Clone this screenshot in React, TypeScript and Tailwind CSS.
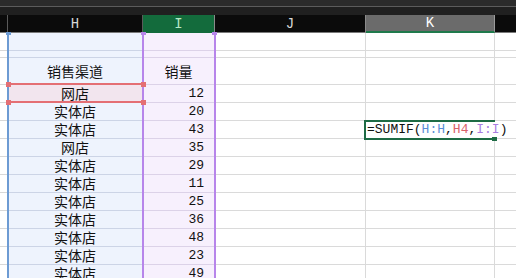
const COLS = "grid grid-cols-[8px_135px_72px_151px_129px_1fr]";

type Row = { h: string; ch?: string; num?: string; head?: boolean };

const rows: Row[] = [
  { h: "h-[18px]" },
  { h: "h-[7px]" },
  { h: "h-[27px]", ch: "销售渠道", num: "销量", head: true },
  { h: "h-[18px]", ch: "网店", num: "12" },
  { h: "h-[18px]", ch: "实体店", num: "20" },
  { h: "h-[18px]", ch: "实体店", num: "43" },
  { h: "h-[18px]", ch: "网店", num: "35" },
  { h: "h-[18px]", ch: "实体店", num: "29" },
  { h: "h-[18px]", ch: "实体店", num: "11" },
  { h: "h-[18px]", ch: "实体店", num: "25" },
  { h: "h-[18px]", ch: "实体店", num: "36" },
  { h: "h-[18px]", ch: "实体店", num: "48" },
  { h: "h-[18px]", ch: "实体店", num: "23" },
  { h: "h-[18px]", ch: "实体店", num: "49" },
];

const cjk = "font-['Noto_Sans_CJK_SC','Noto_Sans',sans-serif]";
const mono = "font-['Liberation_Mono',monospace]";

function Formula() {
  return (
    <span className={`relative z-10 whitespace-nowrap pl-[1px] text-[13px] leading-[15px] text-[#111] ${mono}`}>
      =SUMIF(<span className="text-[#5b8fd8]">H:H</span>,<span className="text-[#d9636b]">H4</span>,
      <span className="text-[#a97de2]">I:I</span>)
    </span>
  );
}

export default function App() {
  return (
    <div className="relative h-[278px] w-[516px] overflow-hidden bg-white">
      <div className="h-[6px] bg-[#2b2b2b]" />
      <div className="h-px bg-[#5c5c5c]" />
      <div className="h-[8px] bg-[#202020]" />

      {/* column headers */}
      <div className={`${COLS} h-[18px] border-b border-[#7a7a7a] bg-[#0b0b0b] text-[14px] leading-[16px] ${mono}`}>
        <div className="border-r border-[#5a5a5a]" />
        <div className="flex items-center justify-center border-r border-[#5a5a5a] text-[#d8d8d8]">H</div>
        <div className="flex items-center justify-center border-r border-[#8a8a8a] bg-[#136b3c] text-[#b8e8c6]">I</div>
        <div className="flex items-center justify-center border-r border-[#8a8a8a] text-[#d8d8d8]">J</div>
        <div className="flex items-center justify-center border-r border-[#9a9a9a] border-b-2 border-b-[#1f7a4c] bg-[#6b6b6b] text-white">K</div>
        <div />
      </div>

      {/* body */}
      {rows.map((r, i) => {
        const sel = i === 3;
        const formulaRow = i === 5;
        return (
          <div key={i} className={`${COLS} ${r.h} text-[#111]`}>
            <div className="border-b border-r border-[#d8d8d8]" />
            <div
              className={`flex items-end justify-center border-b border-r text-[14px] leading-[15px] ${cjk} ${
                sel ? "border-[#d6c8d6] bg-[#f2e5ee]" : "border-[#ccd4e6] bg-[#eef3fd]"
              } ${r.head ? "pb-[5px]" : "pb-[1px]"}`}
            >
              {r.ch}
            </div>
            <div
              className={`flex items-end border-b border-r border-[#dcd2e8] bg-[#f7f0fd] leading-[15px] ${
                r.head ? `justify-center pb-[5px] text-[14px] ${cjk}` : `justify-end pb-[1px] pr-[10px] text-[13px] ${mono}`
              }`}
            >
              {r.num}
            </div>
            <div className="border-b border-r border-[#dadada]" />
            <div className={`flex items-end border-b border-[#dadada] pb-[1px] ${formulaRow ? "" : "border-r"}`}>
              {formulaRow && <Formula />}
            </div>
            <div className="border-b border-[#dadada]" />
          </div>
        );
      })}

      {/* selection of H4 */}
      <div className="absolute left-[9px] top-[83px] h-[2px] w-[133px] bg-[#e46f74]" />
      <div className="absolute left-[9px] top-[101px] h-[2px] w-[133px] bg-[#e46f74]" />

      {/* referenced column ranges */}
      <div className="absolute left-[7px] top-[32px] bottom-0 w-[2px] bg-[#6d9bd3]" />
      <div className="absolute left-[142px] top-[32px] bottom-0 w-[2px] bg-[#b785ea]" />
      <div className="absolute left-[214px] top-[32px] bottom-0 w-[2px] bg-[#b785ea]" />

      {/* handles */}
      <div className="absolute left-[6px] top-[32px] h-[3px] w-[5px] bg-[#6d9bd3]" />
      <div className="absolute left-[141px] top-[32px] h-[3px] w-[5px] bg-[#b785ea]" />
      <div className="absolute left-[212px] top-[32px] h-[3px] w-[5px] bg-[#b785ea]" />
      <div className="absolute left-[6px] top-[82px] h-[5px] w-[5px] bg-[#e46f74]" />
      <div className="absolute left-[141px] top-[82px] h-[5px] w-[5px] bg-[#e46f74]" />
      <div className="absolute left-[6px] top-[100px] h-[5px] w-[5px] bg-[#e46f74]" />
      <div className="absolute left-[141px] top-[100px] h-[5px] w-[5px] bg-[#e46f74]" />

      {/* active cell K6 */}
      <div className="absolute left-[364px] top-[120px] h-[20px] w-[131px] border-l-2 border-t-2 border-b-2 border-[#1e6b45]" />
      <div className="absolute left-[492px] top-[137px] h-[4px] w-[5px] bg-[#1e6b45]" />
    </div>
  );
}
